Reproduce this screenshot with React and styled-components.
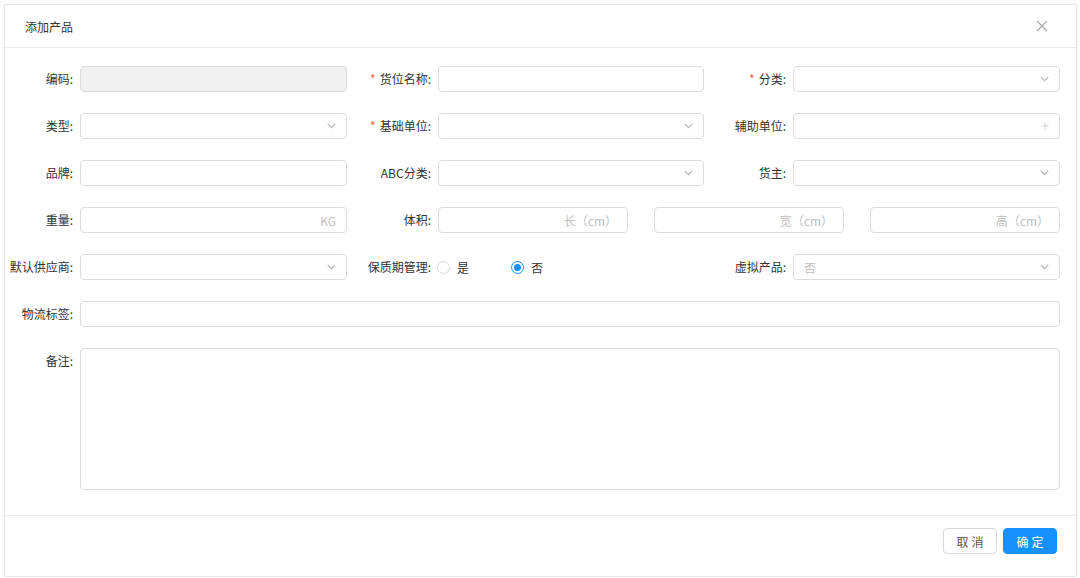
import styled, { createGlobalStyle, css } from "styled-components";

const GlobalStyle = createGlobalStyle`
  html, body {
    margin: 0;
    padding: 0;
    background: #fff;
  }
  body {
    font-family: "Noto Sans CJK SC", "Noto Sans", sans-serif;
    font-size: 12px;
    color: #333;
  }
  * { box-sizing: border-box; }
`;

const Page = styled.div`
  padding: 4px 3px 0 4px;
`;

const Modal = styled.div`
  width: 1073px;
  height: 573px;
  border: 1px solid #e6e6e6;
  box-shadow: 0 0 3px rgba(0, 0, 0, 0.08);
  border-radius: 2px;
  background: #fff;
  display: flex;
  flex-direction: column;
`;

const Header = styled.div`
  height: 43px;
  flex: none;
  border-bottom: 1px solid #ececec;
  display: flex;
  align-items: center;
  justify-content: space-between;
  padding: 0 28px 0 20px;
`;

const Title = styled.div`
  font-size: 12px;
  color: #333;
  line-height: 20px;
  padding-top: 1px;
`;

const Close = styled.button`
  border: none;
  background: none;
  padding: 0;
  width: 12px;
  height: 12px;
  display: flex;
  cursor: pointer;
`;

const Body = styled.div`
  flex: 1;
  padding: 18px 16px 0 0;
`;

const FormGrid = styled.div`
  display: grid;
  grid-template-columns: 75px 267px 91px 266px 89px 267px;
  grid-auto-rows: 26px;
  row-gap: 21px;
`;

const Label = styled.div`
  text-align: right;
  padding-right: 7px;
  line-height: 26px;
  font-size: 12px;
  color: #333;
  white-space: nowrap;
  ${(p) =>
    p.$required &&
    css`
      &::before {
        content: "*";
        color: #f5603c;
        margin-right: 4px;
      }
    `}
`;

const Box = styled.div`
  height: 26px;
  border: 1px solid #dcdcdc;
  border-radius: 4px;
  background: ${(p) => (p.$disabled ? "#f0f0f0" : "#fff")};
  display: flex;
  align-items: center;
  justify-content: ${(p) => (p.$align === "right" ? "flex-end" : "space-between")};
  padding: 0 10px;
  font-size: 12px;
  color: #bfbfbf;
  width: ${(p) => p.$width || "auto"};
`;

const Wide = styled.div`
  grid-column: 2 / span 5;
  ${(p) =>
    p.$tall &&
    css`
      grid-row: span 1;
      height: 142px;
    `}
`;

const TextArea = styled.div`
  height: 142px;
  border: 1px solid #dcdcdc;
  border-radius: 4px;
  background: #fff;
`;

const TopLabel = styled(Label)`
  align-self: start;
  padding-top: 0;
`;

const Triple = styled.div`
  grid-column: 4 / span 3;
  display: flex;
  justify-content: space-between;
`;

const Placeholder = styled.span`
  color: #bfbfbf;
  font-size: 12px;
  white-space: nowrap;
`;

const RadioGroup = styled.div`
  display: flex;
  align-items: center;
  padding-left: 0;
  margin-left: -1px;
`;

const RadioItem = styled.label`
  display: flex;
  align-items: center;
  gap: 7px;
  margin-right: 42px;
  font-size: 12px;
  color: #333;
`;

const RadioDot = styled.span`
  width: 13px;
  height: 13px;
  border-radius: 50%;
  border: 1px solid ${(p) => (p.$checked ? "#1890ff" : "#d9d9d9")};
  display: flex;
  align-items: center;
  justify-content: center;
  background: #fff;
  &::after {
    content: "";
    width: 7px;
    height: 7px;
    border-radius: 50%;
    background: ${(p) => (p.$checked ? "#1890ff" : "transparent")};
  }
`;

const Footer = styled.div`
  height: 61px;
  flex: none;
  border-top: 1px solid #ececec;
  display: flex;
  justify-content: flex-end;
  align-items: flex-start;
  gap: 6px;
  padding: 12px 19px 0;
`;

const Button = styled.button`
  width: 54px;
  height: 26px;
  border-radius: 4px;
  font-family: inherit;
  font-size: 12px;
  letter-spacing: 3px;
  padding: 0 0 0 3px;
  cursor: pointer;
  border: 1px solid ${(p) => (p.$primary ? "#1890ff" : "#d9d9d9")};
  background: ${(p) => (p.$primary ? "#1890ff" : "#fff")};
  color: ${(p) => (p.$primary ? "#fff" : "#555")};
`;

const Chevron = () => (
  <svg width="9" height="6" viewBox="0 0 9 6" fill="none">
    <path d="M0.8 0.8 L4.5 4.6 L8.2 0.8" stroke="#b4b4b4" strokeWidth="1.1" />
  </svg>
);

const Plus = () => (
  <svg width="8" height="8" viewBox="0 0 8 8" fill="none">
    <path d="M4 0.5 V7.5 M0.5 4 H7.5" stroke="#d0d0d0" strokeWidth="1" />
  </svg>
);

const CloseIcon = () => (
  <svg width="12" height="12" viewBox="0 0 12 12" fill="none">
    <path d="M1 1 L11 11 M11 1 L1 11" stroke="#aaa" strokeWidth="1.2" />
  </svg>
);

const Select = ({ value }) => (
  <Box>
    {value ? <Placeholder>{value}</Placeholder> : <span />}
    <Chevron />
  </Box>
);

export default function App() {
  return (
    <>
      <GlobalStyle />
      <Page>
        <Modal>
          <Header>
            <Title>添加产品</Title>
            <Close aria-label="close">
              <CloseIcon />
            </Close>
          </Header>
          <Body>
            <FormGrid>
              <Label>编码:</Label>
              <Box $disabled />
              <Label $required>货位名称:</Label>
              <Box />
              <Label $required>分类:</Label>
              <Select />

              <Label>类型:</Label>
              <Select />
              <Label $required>基础单位:</Label>
              <Select />
              <Label>辅助单位:</Label>
              <Box $align="right">
                <Plus />
              </Box>

              <Label>品牌:</Label>
              <Box />
              <Label>ABC分类:</Label>
              <Select />
              <Label>货主:</Label>
              <Select />

              <Label>重量:</Label>
              <Box $align="right">
                <Placeholder>KG</Placeholder>
              </Box>
              <Label>体积:</Label>
              <Triple>
                <Box $align="right" $width="190px">
                  <Placeholder>长（cm）</Placeholder>
                </Box>
                <Box $align="right" $width="190px">
                  <Placeholder>宽（cm）</Placeholder>
                </Box>
                <Box $align="right" $width="190px">
                  <Placeholder>高（cm）</Placeholder>
                </Box>
              </Triple>

              <Label>默认供应商:</Label>
              <Select />
              <Label>保质期管理:</Label>
              <RadioGroup>
                <RadioItem>
                  <RadioDot />是
                </RadioItem>
                <RadioItem>
                  <RadioDot $checked />否
                </RadioItem>
              </RadioGroup>
              <Label>虚拟产品:</Label>
              <Select value="否" />

              <Label>物流标签:</Label>
              <Wide>
                <Box />
              </Wide>

              <TopLabel>备注:</TopLabel>
              <Wide $tall>
                <TextArea />
              </Wide>
            </FormGrid>
          </Body>
          <Footer>
            <Button>取消</Button>
            <Button $primary>确定</Button>
          </Footer>
        </Modal>
      </Page>
    </>
  );
}
